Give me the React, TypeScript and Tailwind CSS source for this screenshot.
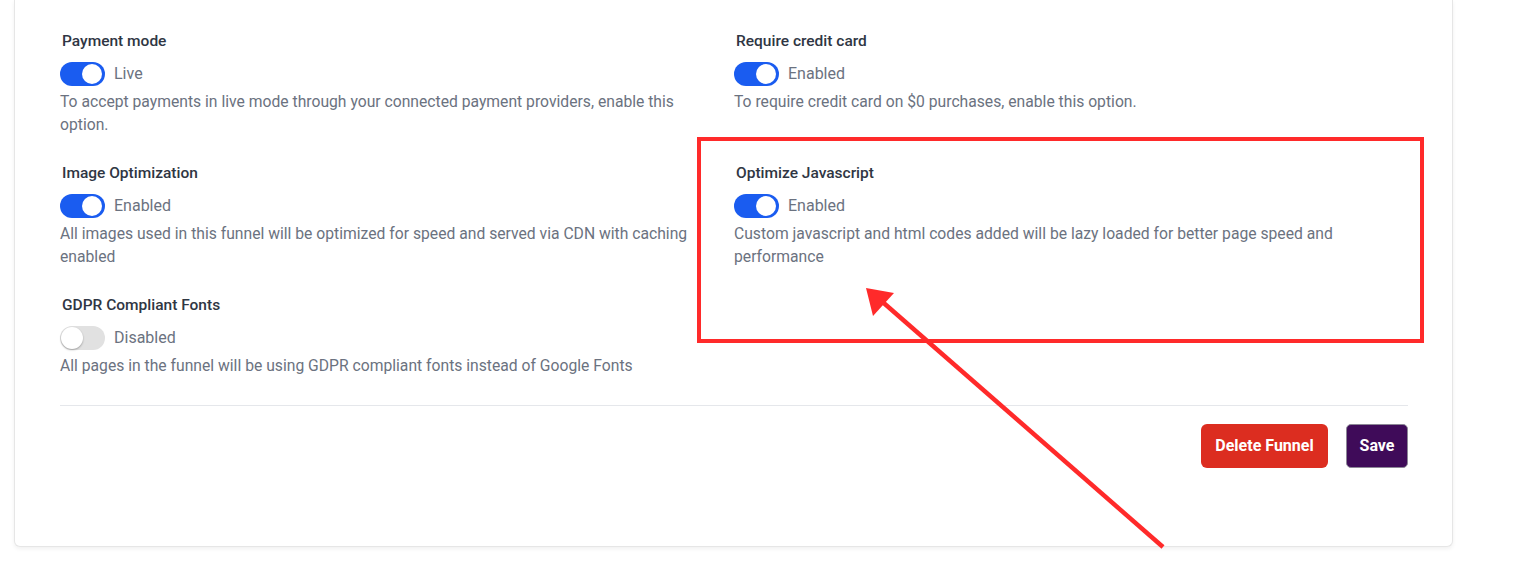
import React from "react";

type Item = {
  title: string;
  on: boolean;
  label: string;
  desc: string;
};

const left: Item[] = [
  {
    title: "Payment mode",
    on: true,
    label: "Live",
    desc: "To accept payments in live mode through your connected payment providers, enable this option.",
  },
  {
    title: "Image Optimization",
    on: true,
    label: "Enabled",
    desc: "All images used in this funnel will be optimized for speed and served via CDN with caching enabled",
  },
  {
    title: "GDPR Compliant Fonts",
    on: false,
    label: "Disabled",
    desc: "All pages in the funnel will be using GDPR compliant fonts instead of Google Fonts",
  },
];

const right: Item[] = [
  {
    title: "Require credit card",
    on: true,
    label: "Enabled",
    desc: "To require credit card on $0 purchases, enable this option.",
  },
  {
    title: "Optimize Javascript",
    on: true,
    label: "Enabled",
    desc: "Custom javascript and html codes added will be lazy loaded for better page speed and performance",
  },
];

function Toggle({ on }: { on: boolean }) {
  return on ? (
    <div className="relative w-[45px] h-[24px] rounded-full bg-[#1a5cf0] shrink-0">
      <div className="absolute right-[3px] top-[2px] w-[20px] h-[20px] rounded-full bg-white" />
    </div>
  ) : (
    <div className="relative w-[45px] h-[24px] rounded-full bg-[#e1e1e1] shrink-0">
      <div className="absolute left-[1px] top-[1px] w-[22px] h-[22px] rounded-full bg-white shadow-[0_1px_2px_rgba(0,0,0,0.3)]" />
    </div>
  );
}

function Setting({ item }: { item: Item }) {
  return (
    <div className="flex flex-col pr-[30px]">
      <div className="pl-[2px] text-[15.5px] leading-[20px] font-medium text-[#2f3643]">{item.title}</div>
      <div className="mt-[11px] flex items-center gap-[9px]">
        <Toggle on={item.on} />
        <span className="text-[16px] leading-[24px] text-[#6b7280]">{item.label}</span>
      </div>
      <p className="mt-[4px] text-[15.7px] leading-[23px] text-[#6b7280]">{item.desc}</p>
    </div>
  );
}

export default function App() {
  return (
    <div
      className="relative w-[1517px] h-[572px] overflow-hidden bg-white"
      style={{ fontFamily: "Roboto, 'Noto Sans', sans-serif" }}
    >
      <div className="ml-[14px] w-[1439px] h-[547px] bg-white border-x border-b border-[#e6e6e6] rounded-b-[6px] shadow-[0_2px_4px_rgba(0,0,0,0.06)] pl-[45px] pr-[44px] pt-[31px]">
        <div className="grid grid-cols-2 gap-y-[27px]">
          <Setting item={left[0]} />
          <Setting item={right[0]} />
          <Setting item={left[1]} />
          <Setting item={right[1]} />
          <Setting item={left[2]} />
          <div />
        </div>
        <div className="mt-[28px] h-px bg-[#e5e7eb]" />
        <div className="mt-[18px] flex justify-end gap-[18px]">
          <button className="h-[44px] w-[127px] rounded-[6px] bg-[#dc2d20] text-white text-[16px] font-bold">
            Delete Funnel
          </button>
          <button className="h-[44px] w-[62px] rounded-[5px] bg-[#3f0b59] border border-[#8c8796] text-white text-[16px] font-bold">
            Save
          </button>
        </div>
      </div>

      {/* annotation rectangle */}
      <div className="absolute left-[697px] top-[137px] w-[727px] h-[206px] border-[4px] border-[#ff2a2a] pointer-events-none" />

      {/* annotation arrow */}
      <svg className="absolute left-0 top-0 pointer-events-none" width="1517" height="572">
        <line x1="1163" y1="547" x2="878" y2="298" stroke="#ff2a2a" strokeWidth="4.5" />
        <polygon points="866,288 894,293 873,316" fill="#ff2a2a" />
      </svg>
    </div>
  );
}
